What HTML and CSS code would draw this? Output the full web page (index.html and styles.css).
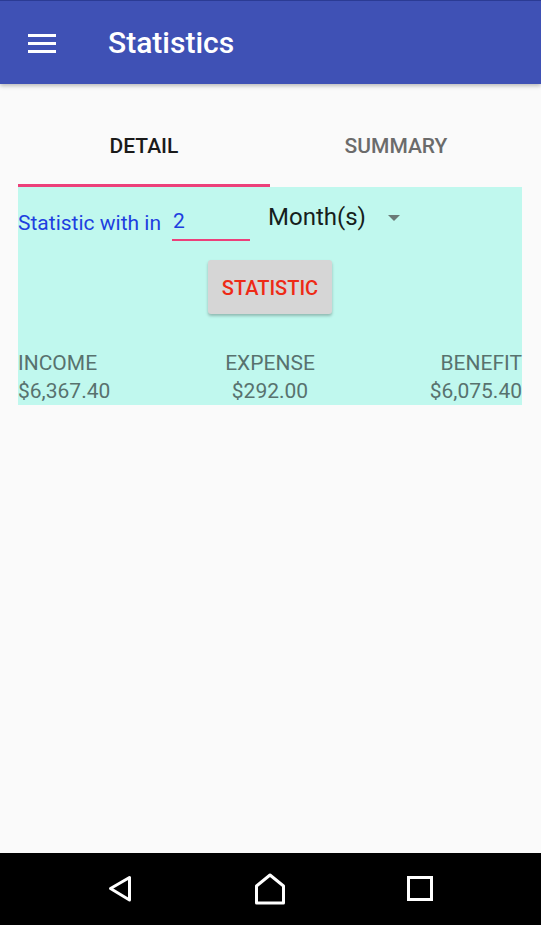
FILE: index.html
```html
<!DOCTYPE html>
<html>

<head>
    <title>Statistics</title>
    <link rel="stylesheet" href="styles.css">
</head>

<body>
    <header class="appbar">
        <svg class="menu-icon" width="28" height="20" viewBox="0 0 28 20">
            <rect x="0" y="0" width="28" height="3" fill="#fff" />
            <rect x="0" y="8" width="28" height="3" fill="#fff" />
            <rect x="0" y="16" width="28" height="3" fill="#fff" />
        </svg>
        <h1>Statistics</h1>
    </header>

    <main class="page">
        <div class="tabs">
            <div class="tab active">DETAIL</div>
            <div class="tab">SUMMARY</div>
        </div>

        <section class="panel">
            <div class="filter-row">
                <span class="filter-label">Statistic with in</span>
                <span class="filter-input">2</span>
                <span class="spinner">
                    Month(s)
                    <svg class="spinner-arrow" width="12" height="6" viewBox="0 0 12 6">
                        <polygon points="0,0 12,0 6,6" fill="#6b7a77" />
                    </svg>
                </span>
            </div>

            <div class="button-row">
                <button class="stat-btn">STATISTIC</button>
            </div>

            <div class="totals">
                <div class="col left">
                    <div>INCOME</div>
                    <div>$6,367.40</div>
                </div>
                <div class="col center">
                    <div>EXPENSE</div>
                    <div>$292.00</div>
                </div>
                <div class="col right">
                    <div>BENEFIT</div>
                    <div>$6,075.40</div>
                </div>
            </div>
        </section>
    </main>

    <footer class="navbar">
        <svg width="30" height="30" viewBox="0 0 30 30">
            <polygon points="6.5,14.5 25.5,3.5 25.5,26" fill="none" stroke="#fff" stroke-width="3" stroke-linejoin="round" />
        </svg>
        <svg width="32" height="32" viewBox="0 0 32 32">
            <polygon points="2.5,13 16,2 29.5,13 29.5,30 2.5,30" fill="none" stroke="#fff" stroke-width="3" stroke-linejoin="round" />
        </svg>
        <svg width="28" height="28" viewBox="0 0 28 28">
            <rect x="2.5" y="2.5" width="23" height="22" fill="none" stroke="#fff" stroke-width="3" />
        </svg>
    </footer>
</body>

</html>
```

FILE: styles.css
```css
html,
body {
    margin: 0;
    height: 100%;
}

body {
    display: flex;
    flex-direction: column;
    font-family: Roboto, "Liberation Sans", sans-serif;
    background-color: #fafafa;
}

.appbar {
    height: 83px;
    background-color: #3f51b5;
    border-top: 1px solid #2b3b94;
    display: flex;
    align-items: center;
    box-shadow: 0 2px 4px rgba(0, 0, 0, 0.25);
    position: relative;
    z-index: 1;
}

.menu-icon {
    margin-left: 28px;
    margin-top: 2px;
}

.appbar h1 {
    margin: 0 0 0 52px;
    color: #fff;
    font-size: 30px;
    font-weight: 500;
}

.page {
    flex: 1;
    padding: 31px 19px 0 18px;
}

.tabs {
    display: flex;
}

.tab {
    flex: 1;
    height: 62px;
    padding-bottom: 7px;
    display: flex;
    align-items: center;
    justify-content: center;
    font-size: 21px;
    font-weight: 500;
    color: #6b6b6b;
    border-bottom: 3px solid transparent;
}

.tab.active {
    color: #1a1a1a;
    border-bottom-color: #ec407a;
}

.panel {
    background-color: #c0f8ee;
}

.filter-row {
    display: flex;
    align-items: center;
    height: 60px;
}

.filter-label {
    color: #1e3fe0;
    font-size: 21px;
    margin-top: 11px;
}

.filter-input {
    width: 77px;
    margin-left: 11px;
    padding: 0 0 6px 1px;
    margin-top: 16px;
    color: #1e3fe0;
    font-size: 21px;
    border-bottom: 2px solid #ec407a;
}

.spinner {
    display: flex;
    align-items: center;
    margin-left: 18px;
    font-size: 24px;
    color: #161e1c;
}

.spinner-arrow {
    margin-left: 22px;
    margin-top: 2px;
}

.button-row {
    display: flex;
    justify-content: center;
    padding-top: 13px;
}

.stat-btn {
    width: 124px;
    height: 54px;
    padding-top: 2px;
    border: none;
    border-radius: 3px;
    background-color: #d6d6d6;
    color: #ee2a16;
    font-family: Roboto, "Liberation Sans", sans-serif;
    font-size: 20px;
    font-weight: 500;
    box-shadow: 0 2px 3px rgba(0, 0, 0, 0.25);
}

.totals {
    display: grid;
    grid-template-columns: 1fr 1fr 1fr;
    margin-top: 35px;
    color: #58726e;
    font-size: 21px;
    line-height: 28px;
}

.col.center {
    text-align: center;
}

.col.right {
    text-align: right;
}

.navbar {
    height: 72px;
    background-color: #000;
    display: flex;
    align-items: center;
    justify-content: space-between;
    padding: 0 107px 0 104px;
}
```
